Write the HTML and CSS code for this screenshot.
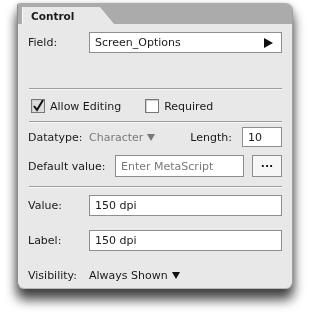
FILE: index.html
```html
<!DOCTYPE html>
<html>
<head>
	<title>Control</title>
	<link rel="stylesheet" href="styles.css">
</head>
<body>
<div class="page">
<div class="panel">
    <div class="tabbar">
        <div class="tab">Control</div>
    </div>

    <div class="content">
        <div class="row field-row">
            <span class="label">Field:</span>
            <div class="box wide">Screen_Options
                <svg class="arrow" width="9" height="10" viewBox="0 0 9 10"><path d="M0 0 L9 5 L0 10 Z" fill="#111"/></svg>
            </div>
        </div>

        <div class="sep first"></div>

        <div class="row check-row">
            <span class="check on">
                <svg width="12" height="12" viewBox="0 0 12 12"><path d="M2 6 L5 10 L11 0" fill="none" stroke="#111" stroke-width="2"/></svg>
            </span>
            <span>Allow Editing</span>
            <span class="check req"></span>
            <span>Required</span>
        </div>

        <div class="sep"></div>

        <div class="row type-row">
            <span class="label">Datatype:</span>
            <span class="muted">Character</span>
            <svg class="down" width="8" height="7" viewBox="0 0 8 7"><path d="M0 0 L8 0 L4 7 Z" fill="#777"/></svg>
            <span class="len">Length:</span>
            <div class="box small">10</div>
        </div>

        <div class="row default-row">
            <span class="label long">Default value:</span>
            <div class="box mid muted">Enter MetaScript</div>
            <div class="btn">...</div>
        </div>

        <div class="sep third"></div>

        <div class="row value-row">
            <span class="label">Value:</span>
            <div class="box wide">150 dpi</div>
        </div>

        <div class="row label-row">
            <span class="label">Label:</span>
            <div class="box wide">150 dpi</div>
        </div>

        <div class="row vis-row">
            <span class="label">Visibility:</span>
            <span>Always Shown</span>
            <svg class="down" width="8" height="7" viewBox="0 0 8 7"><path d="M0 0 L8 0 L4 7 Z" fill="#111"/></svg>
        </div>
    </div>
</div>
</div>
</body>
</html>
```

FILE: styles.css
```css
* {
	margin: 0;
	padding: 0;
	box-sizing: border-box;
}

body {
	background: #fff;
	font-family: "DejaVu Sans", sans-serif;
	font-size: 11px;
	color: #1a1a1a;
}

.page {
	padding: 3px 17px 28px 17px;
	min-height: 318px;
}

.panel {
	width: 276px;
	background: #e8e8e8;
	border-radius: 3px 7px 7px 7px;
	border-left: 1px solid #8c8c8c;
	border-right: 1px solid #a0a0a0;
	border-bottom: 1px solid #b8b8b8;
	filter: drop-shadow(0 10px 6px rgba(0, 0, 0, 0.7)) drop-shadow(0 1px 3px rgba(0, 0, 0, 0.2));
	padding-bottom: 5px;
}

.tabbar {
	height: 21px;
	background: #ababab;
	border-radius: 3px 7px 0 0;
	padding: 4px 0 0 4px;
}

.tab {
	width: 92px;
	height: 17px;
	background: #e8e8e8;
	border-left: 1px solid #fafafa;
	clip-path: polygon(0 0, 78px 0, 100% 100%, 0 100%);
	font-weight: bold;
	font-size: 10.5px;
	padding: 3px 0 0 8px;
}

.content {
	padding: 0 10px 0 10px;
}

.row {
	display: flex;
	align-items: center;
}

.label {
	width: 61px;
	flex: none;
}

.label.long {
	width: 87px;
}

.box {
	background: #fff;
	border: 1px solid #8e8e8e;
	display: flex;
	align-items: center;
	padding-left: 5px;
	font-size: 11px;
}

.wide {
	flex: 1;
	height: 21px;
}

.arrow {
	margin-left: auto;
	margin-right: 8px;
}

.field-row {
	margin-top: 8px;
}

.sep {
	height: 2px;
	border-top: 1px solid #9c9c9c;
	border-bottom: 1px solid #f8f8f8;
	margin: 8px 0 0 1px;
}

.sep.first {
	margin-top: 35px;
}

.sep.third {
	margin-top: 9px;
}

.check-row {
	margin-top: 9px;
	height: 14px;
}

.check {
	width: 14px;
	height: 14px;
	border: 1px solid #777;
	background: #fff;
	display: inline-flex;
	align-items: center;
	justify-content: center;
	margin: 0 5px 0 3px;
	box-shadow: inset 1px 1px 1px #ccc;
}

.check.on {
	background: #ddd;
}

.check.req {
	margin-left: 24px;
}

.type-row {
	margin-top: 4px;
	height: 20px;
}

.muted {
	color: #7a7a7a;
}

.down {
	margin-left: 4px;
}

.len {
	margin-left: auto;
	margin-right: 10px;
}

.small {
	width: 40px;
	height: 20px;
}

.default-row {
	margin-top: 8px;
	height: 22px;
}

.mid {
	width: 129px;
	height: 22px;
}

.btn {
	margin-left: auto;
	width: 30px;
	height: 22px;
	border: 1px solid #8e8e8e;
	background: #f6f6f6;
	text-align: center;
	font-weight: bold;
	line-height: 16px;
}

.value-row {
	margin-top: 7px;
}

.label-row {
	margin-top: 14px;
}

.vis-row {
	margin-top: 16px;
	height: 16px;
}
```
